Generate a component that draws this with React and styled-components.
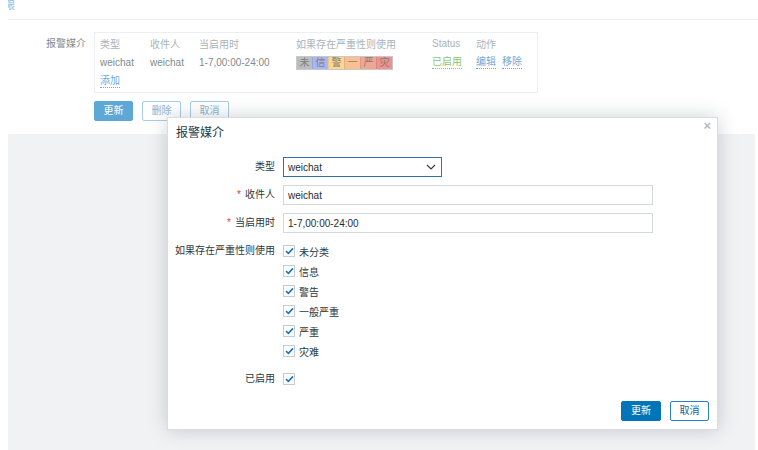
import React from 'react';
import styled, { createGlobalStyle } from 'styled-components';

const GlobalStyle = createGlobalStyle`
  html, body {
    margin: 0;
    padding: 0;
    background: #ffffff;
  }
  body {
    font-family: "Liberation Sans", "Noto Sans CJK SC", sans-serif;
    font-size: 10px;
    color: #1f2c33;
  }
`;

const Page = styled.div`
  position: relative;
  width: 758px;
  height: 450px;
  overflow: hidden;
  display: flex;
  flex-direction: column;
`;

const TabBar = styled.div`
  height: 19px;
  margin-left: 8px;
  border-bottom: 1px solid #eef0f2;
  display: flex;
`;

const TabClip = styled.div`
  width: 7px;
  height: 11px;
  overflow: hidden;
  display: flex;
  justify-content: flex-end;
  color: #8fb4d4;
  line-height: 11px;
  span {
    white-space: nowrap;
  }
`;

const FormRow = styled.div`
  display: flex;
  align-items: flex-start;
  margin-top: 12px;
`;

const RowLabel = styled.div`
  width: 86px;
  text-align: right;
  padding-right: 8px;
  color: #7f8a91;
  line-height: 19px;
  padding-top: 2px;
`;

const MediaBox = styled.div`
  width: 432px;
  border: 1px solid #eceff1;
  padding: 1px 5px;
`;

const MediaGrid = styled.div`
  display: grid;
  grid-template-columns: 50px 49px 97px 136px 44px 1fr;
  grid-auto-rows: 19px;
  align-items: center;
`;

const Head = styled.div`
  color: #a9b3ba;
  white-space: nowrap;
`;

const Cell = styled.div`
  color: #7f8a91;
  white-space: nowrap;
  display: flex;
  gap: 6px;
`;

const Link = styled.span`
  color: ${p => p.$color || '#6fa9d6'};
  border-bottom: 1px dotted ${p => p.$color || '#6fa9d6'};
  line-height: 12px;
`;

const SevBar = styled.div`
  display: flex;
  height: 12px;
  border: 1px solid #c5c9cb;
  width: fit-content;
`;

const Sev = styled.span`
  width: 15px;
  height: 12px;
  background: ${p => p.$bg};
  color: #8a7d72;
  font-size: 10px;
  line-height: 12px;
  text-align: center;
  border-left: ${p => (p.$first ? 'none' : '1px solid rgba(0,0,0,0.08)')};
`;

const ButtonRow = styled.div`
  display: flex;
  gap: 9px;
  margin: 8px 0 0 94px;
`;

const Btn = styled.button`
  height: 20px;
  width: ${p => p.$w || 39}px;
  padding: 0;
  font-family: inherit;
  font-size: 10px;
  border-radius: 2px;
  cursor: pointer;
  background: ${p => (p.$primary ? p.$bg : '#ffffff')};
  color: ${p => (p.$primary ? '#ffffff' : p.$fg)};
  border: 1px solid ${p => p.$bd};
  line-height: 18px;
`;

const GreyArea = styled.div`
  flex: 1;
  margin: 13px 3px 0 8px;
  background: #f1f2f4;
`;

const Modal = styled.div`
  position: absolute;
  left: 167px;
  top: 117px;
  width: 549px;
  height: 311px;
  background: #ffffff;
  border: 1px solid #d7dde1;
  box-shadow: 0 0 18px rgba(30, 50, 70, 0.22);
  display: flex;
  flex-direction: column;
`;

const ModalHead = styled.div`
  height: 30px;
  line-height: 30px;
  padding-left: 8px;
  font-size: 12px;
  color: #2b3a42;
  position: relative;
`;

const Close = styled.span`
  position: absolute;
  right: 6px;
  top: 2px;
  line-height: 12px;
  font-size: 13px;
  font-weight: bold;
  color: #b4bcc2;
`;

const ModalBody = styled.div`
  display: grid;
  grid-template-columns: 107px 1fr;
  column-gap: 8px;
  row-gap: 8px;
  padding-top: 9px;
  align-items: start;
`;

const Label = styled.div`
  text-align: right;
  line-height: 20px;
  color: #2b3a42;
  white-space: nowrap;
`;

const Star = styled.span`
  color: #e53935;
  margin-right: 4px;
`;

const Select = styled.div`
  width: 159px;
  height: 20px;
  box-sizing: border-box;
  border: 1px solid #2a72a8;
  display: flex;
  align-items: center;
  justify-content: space-between;
  padding: 0 5px 0 4px;
  color: #1f2c33;
`;

const Input = styled.div`
  width: 370px;
  height: 20px;
  box-sizing: border-box;
  border: 1px solid #d2d9de;
  display: flex;
  align-items: center;
  padding-left: 4px;
  color: #1f2c33;
`;

const CheckList = styled.div`
  display: flex;
  flex-direction: column;
`;

const CheckItem = styled.label`
  display: flex;
  align-items: center;
  gap: 4px;
  height: 20px;
  color: #2b3a42;
`;

const Box = styled.span`
  width: 12px;
  height: 12px;
  box-sizing: border-box;
  border: 1px solid #c5cdd3;
  background: #ffffff;
  display: inline-flex;
  align-items: center;
  justify-content: center;
`;

const Footer = styled.div`
  margin-top: auto;
  display: flex;
  justify-content: flex-end;
  gap: 9px;
  padding: 0 8px 8px 0;
`;

const Tick = () => (
  <svg width="9" height="8" viewBox="0 0 9 8">
    <path d="M1 4.2 L3.4 6.4 L8 1.4" fill="none" stroke="#1b74b8" strokeWidth="1.6" />
  </svg>
);

const Chevron = () => (
  <svg width="10" height="6" viewBox="0 0 10 6">
    <path d="M1 1 L5 5 L9 1" fill="none" stroke="#2b3a42" strokeWidth="1.1" />
  </svg>
);

const severities = [
  { t: '未', bg: '#b7bfc3' },
  { t: '信', bg: '#a8b6f4' },
  { t: '警', bg: '#fcd88f' },
  { t: '一', bg: '#fbbf90' },
  { t: '严', bg: '#f0a694' },
  { t: '灾', bg: '#ef9191' },
];

const levels = ['未分类', '信息', '警告', '一般严重', '严重', '灾难'];

const Check = ({ children }) => (
  <CheckItem>
    <Box><Tick /></Box>
    {children}
  </CheckItem>
);

export default function App() {
  return (
    <Page>
      <GlobalStyle />
      <TabBar>
        <TabClip><span>权限</span></TabClip>
      </TabBar>

      <FormRow>
        <RowLabel>报警媒介</RowLabel>
        <MediaBox>
          <MediaGrid>
            <Head>类型</Head>
            <Head>收件人</Head>
            <Head>当启用时</Head>
            <Head>如果存在严重性则使用</Head>
            <Head>Status</Head>
            <Head>动作</Head>

            <Cell>weichat</Cell>
            <Cell>weichat</Cell>
            <Cell>1-7,00:00-24:00</Cell>
            <Cell>
              <SevBar>
                {severities.map((s, i) => (
                  <Sev key={s.t} $bg={s.bg} $first={i === 0}>{s.t}</Sev>
                ))}
              </SevBar>
            </Cell>
            <Cell><Link $color="#8cc870">已启用</Link></Cell>
            <Cell><Link>编辑</Link><Link>移除</Link></Cell>

            <Cell><Link>添加</Link></Cell>
          </MediaGrid>
        </MediaBox>
      </FormRow>

      <ButtonRow>
        <Btn $primary $bg="#5ea8d8" $bd="#5ea8d8">更新</Btn>
        <Btn $fg="#8fb4d0" $bd="#a9cde6">删除</Btn>
        <Btn $fg="#8fb4d0" $bd="#a9cde6">取消</Btn>
      </ButtonRow>

      <GreyArea />

      <Modal>
        <ModalHead>
          报警媒介
          <Close>×</Close>
        </ModalHead>
        <ModalBody>
          <Label>类型</Label>
          <Select>
            <span>weichat</span>
            <Chevron />
          </Select>

          <Label><Star>*</Star>收件人</Label>
          <Input>weichat</Input>

          <Label><Star>*</Star>当启用时</Label>
          <Input>1-7,00:00-24:00</Input>

          <Label>如果存在严重性则使用</Label>
          <CheckList>
            {levels.map(l => <Check key={l}>{l}</Check>)}
          </CheckList>

          <Label>已启用</Label>
          <CheckList>
            <Check />
          </CheckList>
        </ModalBody>
        <Footer>
          <Btn $primary $bg="#0275b8" $bd="#0275b8" $w={40}>更新</Btn>
          <Btn $fg="#1d5f92" $bd="#2a83c0">取消</Btn>
        </Footer>
      </Modal>
    </Page>
  );
}
